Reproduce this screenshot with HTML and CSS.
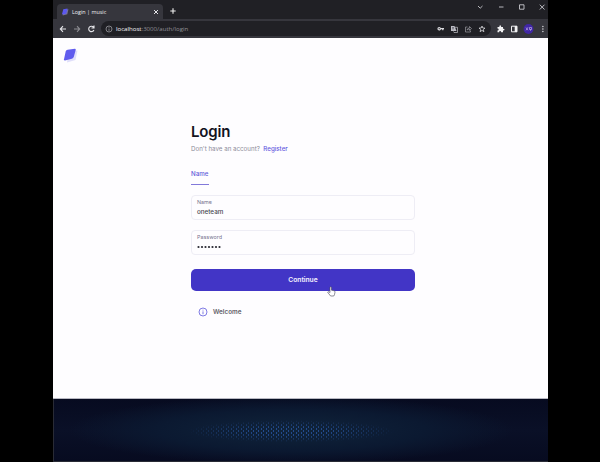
FILE: index.html
```html
<!DOCTYPE html>
<html lang="en">
<head>
<meta charset="utf-8">
<title>Login | music</title>
<link rel="stylesheet" href="styles.css">
</head>
<body>
<div class="window">
  <header class="tabstrip">
    <div class="tab">
      <svg class="favicon" viewBox="0 0 14 14"><path d="M5 3 13 2 11 11 3 13Z" fill="#77749d"/><path d="M4 2 11.500 1 9 10 1.500 11.500Z" fill="#5c58f0"/></svg>
      <span class="tab-title">Login | music</span>
      <svg class="tab-close" viewBox="0 0 6 6"><path d="M1 1 5 5M5 1 1 5" stroke="#e4e4e8" stroke-width="1"/></svg>
    </div>
    <svg class="new-tab" viewBox="0 0 6 6"><path d="M3 .3V5.700M.3 3H5.700" stroke="#eee" stroke-width="1.100"/></svg>
    <svg class="controls" viewBox="0 0 72 12" fill="none" stroke="#c9c9cf" stroke-width=".9"><path d="M3 5 5.200 7.200 7.500 5M24 6H28.500M44.500 3.800H49V8.200H44.500ZM64.800 3.700 69.500 8.500M69.500 3.700 64.800 8.500"/></svg>
  </header>
  <nav class="toolbar">
    <svg class="nav-icons" viewBox="0 0 38 10" fill="none" stroke="#e6e6ea" stroke-width="1.100"><path d="M7 5H1.500M4 2.200 1.300 5 4 7.800"/><path d="M15 5H20.500M18 2.200 20.700 5 18 7.800" stroke="#8b8b91"/><path d="M34.500 3.200A2.700 2.700 0 1 0 34.900 6M35 1.500V4H32.500"/></svg>
    <div class="address">
      <svg class="site-info" viewBox="0 0 8 8" fill="none" stroke="#aaaab0" stroke-width=".7"><circle cx="4" cy="4" r="3"/><path d="M4 3.600V5.800M4 2.200V2.900"/></svg>
      <span class="url"><b>localhost</b>:3000/auth/login</span>
      <svg class="address-icons" viewBox="0 0 52 10" fill="none" stroke="#dcdce0" stroke-width=".8">
        <circle cx="3.200" cy="4.700" r="1.200" stroke-width="1.200"/><path d="M4.500 4.700H8M6.800 4.700V6.200" stroke-width="1.200"/>
        <path d="M15 2H18.500L20.500 7H15Z" fill="#bcbcc4" stroke="none"/><path d="M19 3.300H21.500V8.500H18L17.500 7.500" stroke-width=".6"/><path d="M16 3.700H18M17 3.700V5.500" stroke="#37373f" stroke-width=".6"/>
        <path d="M31.500 3H29.500V8H34.500V6.500M31 6Q31.500 4 33.500 4V2.500L35.500 4.500 33.500 6.300V5Q32 5 31 6Z" stroke="#9b9ba2" stroke-width=".7"/>
        <path d="M46 2 46.800 4 49 4.100 47.300 5.500 47.900 7.700 46 6.400 44.100 7.700 44.700 5.500 43 4.100 45.200 4Z"/>
      </svg>
    </div>
    <svg class="extensions" viewBox="0 0 54 12"><path d="M5 4H6.300Q6.200 2.300 7.200 2.300T8.200 4H10V5.700Q11.500 5.600 11.500 6.600T10 7.600V9.300H8.200Q8.100 8 7.100 8T6.100 9.300H4.500V7.500Q5.700 7.400 5.700 6.500T4.500 5.500V4Z" fill="#f2f2f4"/><path d="M18.500 3.200H24V8.800H18.500Z" fill="none" stroke="#f2f2f4"/><path d="M21.700 3H24V9H21.700Z" fill="#f2f2f4"/><circle cx="35.500" cy="6" r="4.900" fill="#4026a5"/><path d="M33 4.500 35 7.300M35 4.300 33 7.300M36.500 4.500H38.500V6.500H36.500ZM37.500 6.500V7.800" fill="none" stroke="#c8b6ea" stroke-width=".65"/><g fill="#d9d9de"><circle cx="49.900" cy="3.500" r=".75"/><circle cx="49.900" cy="6" r=".75"/><circle cx="49.900" cy="8.500" r=".75"/></g></svg>
  </nav>
  <main class="page">
    <svg class="logo" viewBox="0 0 16 16"><path d="M5.500 3.500 14.500 2.500 12.500 12 4 14.500Z" fill="#e0dffa"/><path d="M2.700 3.500Q3.100 2 4.600 1.700L11.800 .7Q13 .7 12.700 1.900L10.900 8.500Q10.400 10.200 8.800 10.800L2 12.500Q.8 12.500 1 11.200Z" fill="#605cee"/></svg>
    <form class="login">
      <h1>Login</h1>
      <p class="hint"><span>Don't have an account?</span><a>Register</a></p>
      <div class="method">Name</div>
      <label class="field"><span class="label">Name</span><span class="value">oneteam</span></label>
      <label class="field"><span class="label">Password</span><svg class="dots" viewBox="0 0 26 10" fill="#292932"><circle cx="1.500" cy="5" r="1.100"/><circle cx="5" cy="5" r="1.100"/><circle cx="8.500" cy="5" r="1.100"/><circle cx="12" cy="5" r="1.100"/><circle cx="15.500" cy="5" r="1.100"/><circle cx="19" cy="5" r="1.100"/><circle cx="22.500" cy="5" r="1.100"/></svg></label>
      <div class="button">Continue
        <svg class="cursor" viewBox="0 0 10 12"><path d="M3.300 7V1.700Q3.300.7 4.100.7T4.900 1.700V4.500L8 5.200Q9.100 5.500 8.900 6.700L8.300 9.500 7.500 11H4L1 7.200Q.6 6.400 1.300 6.200T3.300 7.200Z" fill="#fff" stroke="#4b4a5b" stroke-width=".7"/></svg>
      </div>
      <div class="notice"><svg viewBox="0 0 10 10" fill="none" stroke="#6964de" stroke-width=".85"><circle cx="5" cy="5" r="4"/><path d="M5 4.400V7.200M5 2.700V3.500"/></svg><span>Welcome</span></div>
    </form>
  </main>
  <footer class="desktop"></footer>
</div>
</body>
</html>
```
FILE: styles.css
```css
* { box-sizing: border-box; }
body { margin: 0; height: 462px; background: #000; overflow: hidden; font-family: Inter, "Liberation Sans", sans-serif; }
svg { display: block; flex: none; }
.window { width: 495px; height: 462px; margin-left: 53px; }
.tabstrip { height: 19px; background: #202025; display: flex; align-items: flex-end; padding-left: 4px; }
.tab { width: 106px; height: 15px; padding: 0 3px 0 4px; border-radius: 4px 4px 0 0; background: #36363d; display: flex; align-items: center; font: 5.6px "Open Sans", sans-serif; color: #f3f3f5; }
.favicon { width: 8px; height: 8px; }
.tab-title { margin-left: 3px; flex: 1; font-size: 5.4px; }
.tab-close { width: 6px; height: 6px; margin-right: 1px; }
.new-tab { width: 6px; height: 6px; margin: 0 0 5px 7px; }
.controls { width: 72px; height: 12px; margin: 0 1px 6px auto; }
.toolbar { height: 19px; background: #36363d; display: flex; align-items: center; }
.nav-icons { width: 38px; height: 10px; margin-left: 6px; }
.address { width: 390px; height: 15px; margin-left: 4px; border-radius: 8px; background: #202025; display: flex; align-items: center; padding: 0 3px 0 4px; }
.site-info { width: 8px; height: 8px; }
.url { margin-left: 3px; flex: 1; font: 6.1px "Open Sans", sans-serif; color: #929298; white-space: nowrap; }
.url b { font-weight: 400; color: #f7f7fa; }
.address-icons { width: 52px; height: 10px; }
.extensions { width: 54px; height: 12px; margin-left: 2px; }
.page { height: 361px; background: #fefdff; border-bottom: 1px solid #b9b9c3; padding: 10px 0 0 10px; }
.logo { width: 16px; height: 16px; }
.login { width: 224px; margin: 59px 0 0 128px; }
h1 { margin: 0; font-size: 15px; line-height: 18px; font-weight: 600; letter-spacing: -.15px; color: #13131e; }
.hint { margin: 3px 0 0; font-size: 6.2px; line-height: 9px; color: #8c8b99; display: flex; gap: 3.500px; }
.hint a { color: #6559e0; font-weight: 500; }
.method { width: 18px; height: 15px; margin: 17px 0 10px; border-bottom: 1px solid #8279da; color: #6258d9; font-size: 6.2px; line-height: 8px; font-weight: 500; }
.field { width: 224px; height: 25px; margin-bottom: 10px; border: 1px solid #eeedf5; border-radius: 4px; padding: 2px 0 0 5px; display: flex; flex-direction: column; }
.field + .field { margin-bottom: 14px; }
.label { font-size: 5.4px; line-height: 8px; color: #77748f; }
.value { font-size: 6.3px; line-height: 10px; color: #45454f; font-weight: 500; margin-top: 1px; }
.dots { width: 26px; height: 10px; margin-top: 1px; }
.button { position: relative; height: 22px; border-radius: 5px; background: #4235c6; color: #f5f3ff; display: flex; align-items: center; justify-content: center; font-size: 6.7px; font-weight: 600; }
.cursor { position: absolute; left: 136px; top: 17px; width: 9px; height: 11px; }
.notice { display: flex; align-items: center; gap: 5px; margin: 16px 0 0 7px; font-size: 6.3px; font-weight: 600; color: #626068; }
.notice svg { width: 10px; height: 10px; }
.desktop { position: relative; height: 63px; border-left: 1px solid #292b35; border-bottom: 1px solid #292b35; background-color: #090d20; background-image: radial-gradient(ellipse 45% 55% at 48% 50%, #10243b, #0b1931 60%, transparent), linear-gradient(#070b20, #0a1027 50%, #070b20); }
.desktop::after { content: ""; position: absolute; inset: 0; background: radial-gradient(circle, #234b8e 0 .5px, transparent .8px) 0 0 / 5px 4px, radial-gradient(circle, #234b8e 0 .5px, transparent .8px) 2px 2px / 5px 4px; mask-image: radial-gradient(ellipse 21% 18% at 48% 52%, #000 35%, transparent); }
```
